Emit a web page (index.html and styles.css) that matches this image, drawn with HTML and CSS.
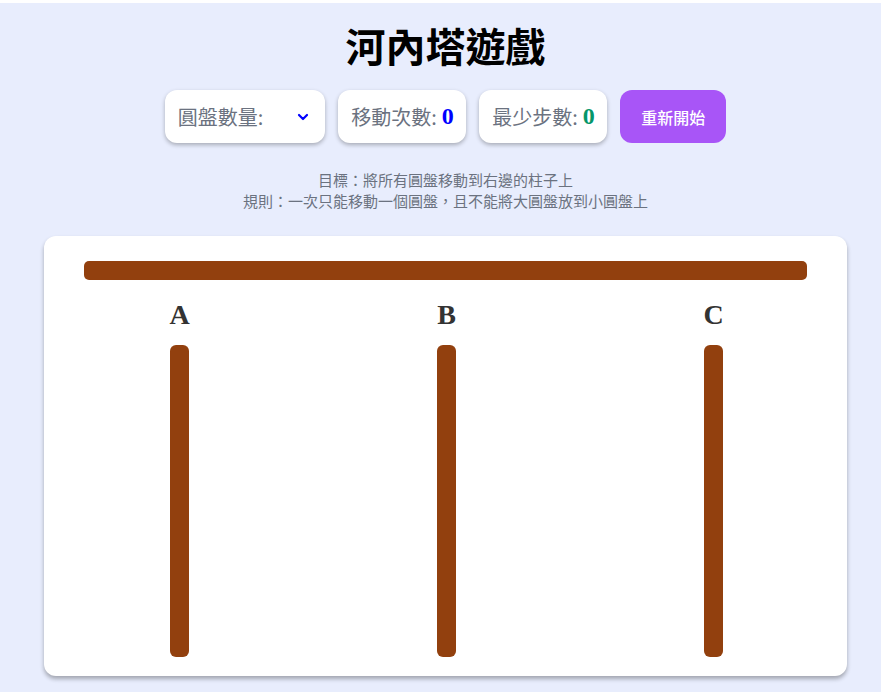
FILE: index.html
```html
<!DOCTYPE html>
<html lang="zh-Hant">
<head>
<meta charset="utf-8">
<title>河內塔遊戲</title>
<link rel="stylesheet" href="styles.css">
</head>
<body>
<div class="page">
  <h1 class="title">河內塔遊戲</h1>
  <div class="controls">
    <div class="box select-box">
      <span class="label">圓盤數量:</span>
      <svg class="chevron" width="12" height="8" viewBox="0 0 12 8"><path d="M2 2 L6 6 L10 2" fill="none" stroke="#0000ff" stroke-width="2.2" stroke-linecap="round" stroke-linejoin="round"/></svg>
    </div>
    <div class="box">
      <span class="label">移動次數:</span><span class="num blue">0</span>
    </div>
    <div class="box">
      <span class="label">最少步數:</span><span class="num green">0</span>
    </div>
    <button class="restart">重新開始</button>
  </div>
  <div class="desc">
    <div>目標：將所有圓盤移動到右邊的柱子上</div>
    <div>規則：一次只能移動一個圓盤，且不能將大圓盤放到小圓盤上</div>
  </div>
  <div class="board">
    <div class="beam"></div>
    <div class="towers">
      <div class="tower"><div class="tlabel">A</div><div class="pole"></div></div>
      <div class="tower"><div class="tlabel">B</div><div class="pole"></div></div>
      <div class="tower"><div class="tlabel">C</div><div class="pole"></div></div>
    </div>
  </div>
</div>
</body>
</html>
```

FILE: styles.css
```css
html {
  background: #ffffff;
}
body {
  margin: 0;
  padding-top: 3px;
  font-family: "Liberation Serif", serif;
}
.page {
  background: #e8edfd;
  height: 689px;
  padding: 18px 0 0 10px;
  box-sizing: border-box;
  display: flex;
  flex-direction: column;
  align-items: center;
}
.title {
  margin: 0;
  font-family: "Noto Sans CJK TC", "Noto Sans", sans-serif;
  font-size: 40px;
  line-height: 48px;
  font-weight: 700;
  color: #000;
}
.controls {
  margin-top: 21px;
  display: flex;
  gap: 13.4px;
  height: 53px;
}
.box {
  background: #fff;
  border-radius: 12px;
  box-shadow: 0 2px 4px rgba(0, 0, 0, 0.28);
  display: flex;
  align-items: center;
  padding: 0 12px 0 13px;
}
.select-box {
  width: 160px;
  box-sizing: border-box;
  padding-right: 16px;
}
.chevron {
  margin-left: auto;
}
.label {
  font-family: "Noto Sans CJK TC", "Noto Sans", sans-serif;
  font-size: 20px;
  color: #6b7280;
}
.num {
  font-family: "Liberation Serif", serif;
  font-weight: 700;
  font-size: 24px;
  margin-left: 5px;
}
.blue { color: #0000ff; }
.green { color: #059669; }
.restart {
  border: none;
  background: #a855f7;
  color: #fff;
  border-radius: 12px;
  padding: 0 21px;
  font-family: "Noto Sans CJK TC", "Noto Sans", sans-serif;
  font-size: 16px;
  font-weight: 500;
}
.desc {
  margin-top: 26px;
  text-align: center;
  font-family: "Noto Sans CJK TC", "Noto Sans", sans-serif;
  font-size: 15px;
  line-height: 21px;
  color: #6b7280;
}
.board {
  margin-top: 25px;
  width: 803px;
  height: 440px;
  box-sizing: border-box;
  background: #fff;
  border-radius: 12px;
  box-shadow: 0 3px 4px rgba(0, 0, 0, 0.3);
  padding-top: 25px;
  display: flex;
  flex-direction: column;
}
.beam {
  margin: 0 40px;
  height: 19px;
  border-radius: 5px;
  background: #92400e;
}
.towers {
  margin: 19px 0 0 2px;
  display: grid;
  grid-template-columns: repeat(3, 1fr);
}
.tower {
  display: flex;
  flex-direction: column;
  align-items: center;
}
.tlabel {
  font-family: "Liberation Serif", serif;
  font-weight: 700;
  font-size: 28px;
  line-height: 32px;
  color: #333;
}
.pole {
  margin-top: 14px;
  width: 19px;
  height: 312px;
  border-radius: 6px;
  background: #92400e;
}
```
